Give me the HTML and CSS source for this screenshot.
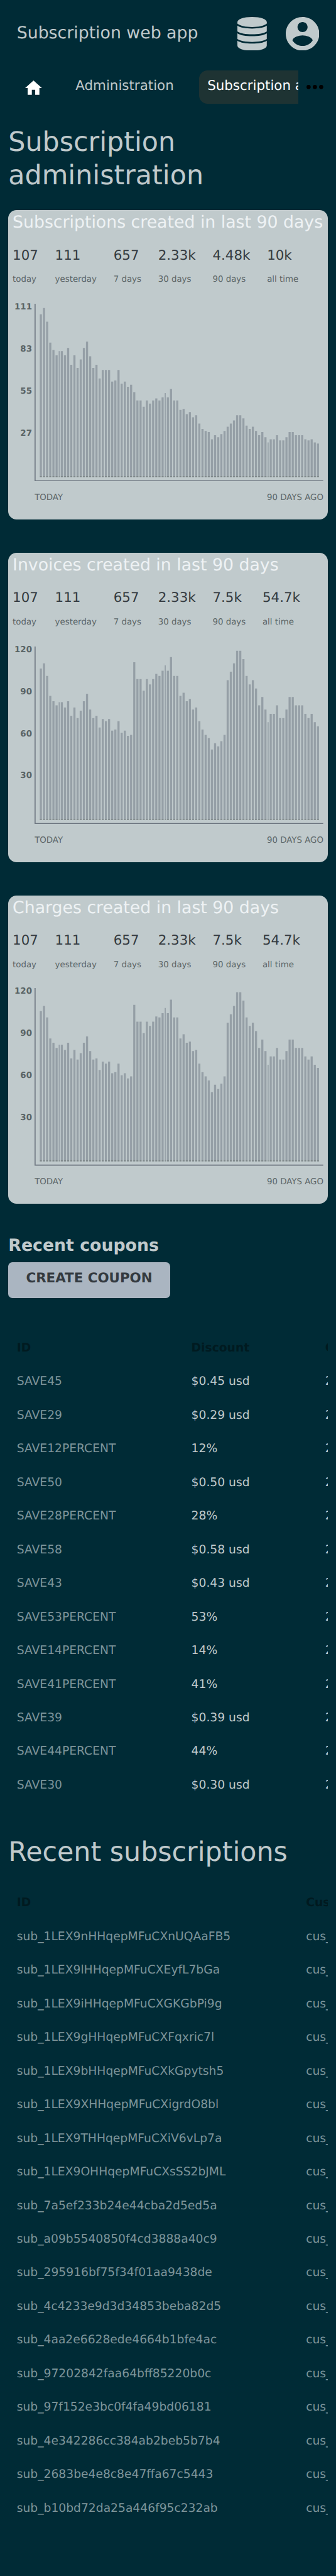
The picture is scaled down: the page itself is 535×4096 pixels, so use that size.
FILE: index.html
```html
<!DOCTYPE html>
<html lang="en">
<head>
<meta charset="utf-8">
<title>Subscription administration</title>
<link rel="stylesheet" href="styles.css">
</head>
<body>
<header class="header">
  <div class="brand">Subscription web app</div>
  <svg class="icon-data" viewBox="0 0 56 64" fill="currentColor"><path d="M0 10C0 4 12 0 28 0s28 4 28 10v2.5C51 16.7 41 19 28 19S5 16.7 0 12.5z"/><path d="M0 16.5C6 20.5 16 22 28 22s22-1.5 28-5.5v11C51 31 40 33 28 33S5 31 0 27.5z"/><path d="M0 31C6 35 16 36.4 28 36.4S50 35 56 31v11c-5 3.5-16 5.5-28 5.500S5 45.500 0 42z"/><path d="M0 45.300C6 49.300 16 50.700 28 50.700s22-1.400 28-5.400V54c0 6-12 10-28 10S0 60 0 54z"/></svg>
  <svg class="icon-user" viewBox="2 2 20 20" fill="currentColor"><path d="M12 2C6.480 2 2 6.480 2 12s4.480 10 10 10 10-4.480 10-10S17.520 2 12 2zm0 3c1.660 0 3 1.340 3 3s-1.340 3-3 3-3-1.340-3-3 1.340-3 3-3zm0 14.200c-2.500 0-4.710-1.280-6-3.220.03-1.990 4-3.080 6-3.080 1.990 0 5.970 1.090 6 3.080-1.290 1.940-3.500 3.220-6 3.220z"/></svg>
</header>
<nav class="nav">
  <div class="nav-items">
    <a class="nav-item nav-home"><svg viewBox="2 3 20 17" fill="currentColor"><path d="M10 20v-6h4v6h5v-8h3L12 3 2 12h3v8z"/></svg></a>
    <a class="nav-item">Administration</a>
    <a class="nav-item active">Subscription administration</a>
  </div>
  <svg class="nav-more" viewBox="0 0 32 8"><circle cx="4" cy="4" r="4"/><circle cx="16" cy="4" r="4"/><circle cx="28" cy="4" r="4"/></svg>
</nav>
<main>
  <h1>Subscription administration</h1>

  <section class="card">
    <h2 class="card-title">Subscriptions created in last 90 days</h2>
    <div class="stats">
      <div><b>107</b><span>today</span></div><div><b>111</b><span>yesterday</span></div><div><b>657</b><span>7 days</span></div><div><b>2.33k</b><span>30 days</span></div><div><b>4.48k</b><span>90 days</span></div><div><b>10k</b><span>all time</span></div>
    </div>
    <div class="chart">
      <div class="scale"><span>111</span><span>83</span><span>55</span><span>27</span></div>
      <svg class="plot" viewBox="0 0 550 338" data-series="subscriptions"></svg>
    </div>
    <div class="range"><span>TODAY</span><span>90 DAYS AGO</span></div>
  </section>

  <section class="card">
    <h2 class="card-title">Invoices created in last 90 days</h2>
    <div class="stats">
      <div><b>107</b><span>today</span></div><div><b>111</b><span>yesterday</span></div><div><b>657</b><span>7 days</span></div><div><b>2.33k</b><span>30 days</span></div><div><b>7.5k</b><span>90 days</span></div><div><b>54.7k</b><span>all time</span></div>
    </div>
    <div class="chart">
      <div class="scale"><span>120</span><span>90</span><span>60</span><span>30</span></div>
      <svg class="plot" viewBox="0 0 550 338" data-series="invoices"></svg>
    </div>
    <div class="range"><span>TODAY</span><span>90 DAYS AGO</span></div>
  </section>

  <section class="card card-last">
    <h2 class="card-title">Charges created in last 90 days</h2>
    <div class="stats">
      <div><b>107</b><span>today</span></div><div><b>111</b><span>yesterday</span></div><div><b>657</b><span>7 days</span></div><div><b>2.33k</b><span>30 days</span></div><div><b>7.5k</b><span>90 days</span></div><div><b>54.7k</b><span>all time</span></div>
    </div>
    <div class="chart">
      <div class="scale"><span>120</span><span>90</span><span>60</span><span>30</span></div>
      <svg class="plot" viewBox="0 0 550 338" data-series="charges"></svg>
    </div>
    <div class="range"><span>TODAY</span><span>90 DAYS AGO</span></div>
  </section>

  <h3>Recent coupons</h3>
  <a class="button">CREATE COUPON</a>
  <div class="table-wrap coupons">
    <table>
      <tr><th>ID</th><th>Discount</th><th>C</th></tr>
      <tr><td><a>SAVE45</a></td><td>$0.45 usd</td><td>2</td></tr>
      <tr><td><a>SAVE29</a></td><td>$0.29 usd</td><td>2</td></tr>
      <tr><td><a>SAVE12PERCENT</a></td><td>12%</td><td>2</td></tr>
      <tr><td><a>SAVE50</a></td><td>$0.50 usd</td><td>2</td></tr>
      <tr><td><a>SAVE28PERCENT</a></td><td>28%</td><td>2</td></tr>
      <tr><td><a>SAVE58</a></td><td>$0.58 usd</td><td>2</td></tr>
      <tr><td><a>SAVE43</a></td><td>$0.43 usd</td><td>2</td></tr>
      <tr><td><a>SAVE53PERCENT</a></td><td>53%</td><td>2</td></tr>
      <tr><td><a>SAVE14PERCENT</a></td><td>14%</td><td>2</td></tr>
      <tr><td><a>SAVE41PERCENT</a></td><td>41%</td><td>2</td></tr>
      <tr><td><a>SAVE39</a></td><td>$0.39 usd</td><td>2</td></tr>
      <tr><td><a>SAVE44PERCENT</a></td><td>44%</td><td>2</td></tr>
      <tr><td><a>SAVE30</a></td><td>$0.30 usd</td><td>2</td></tr>
    </table>
  </div>

  <h2 class="section-title">Recent subscriptions</h2>
  <div class="table-wrap subscriptions">
    <table>
      <tr><th>ID</th><th>Cus</th></tr>
      <tr><td><a>sub_1LEX9nHHqepMFuCXnUQAaFB5</a></td><td><a>cus_</a></td></tr>
      <tr><td><a>sub_1LEX9lHHqepMFuCXEyfL7bGa</a></td><td><a>cus_</a></td></tr>
      <tr><td><a>sub_1LEX9iHHqepMFuCXGKGbPi9g</a></td><td><a>cus_</a></td></tr>
      <tr><td><a>sub_1LEX9gHHqepMFuCXFqxric7l</a></td><td><a>cus_</a></td></tr>
      <tr><td><a>sub_1LEX9bHHqepMFuCXkGpytsh5</a></td><td><a>cus_</a></td></tr>
      <tr><td><a>sub_1LEX9XHHqepMFuCXigrdO8bl</a></td><td><a>cus_</a></td></tr>
      <tr><td><a>sub_1LEX9THHqepMFuCXiV6vLp7a</a></td><td><a>cus_</a></td></tr>
      <tr><td><a>sub_1LEX9OHHqepMFuCXsSS2bJML</a></td><td><a>cus_</a></td></tr>
      <tr><td><a>sub_7a5ef233b24e44cba2d5ed5a</a></td><td><a>cus_</a></td></tr>
      <tr><td><a>sub_a09b5540850f4cd3888a40c9</a></td><td><a>cus_</a></td></tr>
      <tr><td><a>sub_295916bf75f34f01aa9438de</a></td><td><a>cus_</a></td></tr>
      <tr><td><a>sub_4c4233e9d3d34853beba82d5</a></td><td><a>cus_</a></td></tr>
      <tr><td><a>sub_4aa2e6628ede4664b1bfe4ac</a></td><td><a>cus_</a></td></tr>
      <tr><td><a>sub_97202842faa64bff85220b0c</a></td><td><a>cus_</a></td></tr>
      <tr><td><a>sub_97f152e3bc0f4fa49bd06181</a></td><td><a>cus_</a></td></tr>
      <tr><td><a>sub_4e342286cc384ab2beb5b7b4</a></td><td><a>cus_</a></td></tr>
      <tr><td><a>sub_2683be4e8c8e47ffa67c5443</a></td><td><a>cus_</a></td></tr>
      <tr><td><a>sub_b10bd72da25a446f95c232ab</a></td><td><a>cus_</a></td></tr>
    </table>
  </div>
</main>
<script src="charts.js"></script>
</body>
</html>
```
FILE: styles.css
```css
/* 1rem is ten units of a 640-unit wide layout */
html {
  font-size: 8.357px;
}
* {
  box-sizing: border-box;
}
body {
  margin: 0;
  min-height: 4096px;
  background: #002b36;
  color: #c0cacc;
  font-family: "DejaVu Sans", Verdana, sans-serif;
  text-rendering: geometricPrecision;
  overflow-x: hidden;
}
svg {
  display: block;
  flex: none;
}
h1, h2, h3 {
  margin: 0;
  font-weight: normal;
}

.header {
  display: flex;
  align-items: center;
  height: 12.8rem;
  padding: 0 3.2rem;
}
.brand {
  flex: 1;
  font-size: 3.2rem;
  line-height: 4rem;
  padding-bottom: 0.1rem;
}
.icon-data {
  width: 5.6rem;
  height: 6.4rem;
  margin-right: 3.6rem;
}
.icon-user {
  width: 6.4rem;
  height: 6.4rem;
}

.nav {
  display: flex;
  align-items: center;
  padding: 0.6rem 2.4rem 0 3.2rem;
}
.nav-items {
  display: flex;
  flex: none;
  gap: 3.2rem;
  width: 53.6rem;
  margin-right: 1.6rem;
  overflow: hidden;
}
.nav-item {
  flex: none;
  height: 6.4rem;
  padding: 0 1.6rem;
  font-size: 2.56rem;
  line-height: 5.9rem;
  white-space: nowrap;
}
.nav-home {
  padding-top: 1.9rem;
  color: #fff;
}
.nav-home svg {
  width: 3.2rem;
  height: 2.72rem;
}
.nav-item.active {
  border-radius: 1.6rem;
  background: #1e3333;
  color: #fff;
}
.nav-more {
  width: 3.2rem;
  height: 0.8rem;
}

main {
  padding: 4.1rem 1.6rem 0;
}
h1, .section-title {
  font-size: 5.12rem;
  line-height: 6.4rem;
}

.card {
  height: 58.8rem;
  margin-bottom: 6.4rem;
  border-radius: 1.6rem;
  background: #c0cacc;
}
h1 + .card {
  margin-top: 3.3rem;
}
.card-last {
  height: 58.6rem;
  margin-bottom: 6rem;
}
.card-title {
  padding-left: 0.8rem;
  font-size: 3.2rem;
  line-height: 4.75rem;
  color: #eef2f4;
  white-space: nowrap;
}
.stats {
  display: flex;
  gap: 3.2rem;
  padding: 2.35rem 0.8rem 0;
}
.stats b {
  display: block;
  font-size: 2.56rem;
  font-weight: normal;
  line-height: 3.1rem;
  color: #343a40;
}
.stats span {
  display: block;
  margin-top: 1.85rem;
  font-size: 1.6rem;
  line-height: 2.4rem;
  color: #5c6668;
}
.chart {
  display: flex;
  gap: 0.5rem;
  margin-top: 3.35rem;
}
.card-last .chart {
  margin-top: 3.15rem;
}
.scale {
  width: 4.5rem;
  font-size: 1.6rem;
  font-weight: bold;
  line-height: 1.5rem;
  text-align: right;
  color: #5a6466;
}
.scale span {
  display: block;
  height: 8rem;
}
.plot {
  width: 55rem;
  height: 33.8rem;
}
.axis {
  fill: none;
  stroke: #6c757f;
  stroke-width: 2;
}
.bars {
  fill: #959fa6;
}
.bar-feet {
  fill: #7d8688;
}
.range {
  display: flex;
  justify-content: space-between;
  padding: 1.95rem 0.8rem 0 5rem;
  font-size: 1.6rem;
  line-height: 2.4rem;
  color: #5c6668;
}
/* the scale's last row ends inside the plot height */
.scale {
  height: 33.8rem;
}

h3 {
  font-size: 3.2rem;
  font-weight: bold;
  line-height: 4rem;
}
.button {
  display: block;
  width: 30.8rem;
  height: 6.8rem;
  margin-top: 1.2rem;
  border-radius: 0.8rem;
  background: #aab5c1;
  color: #343a40;
  font-size: 2.56rem;
  font-weight: bold;
  line-height: 6.3rem;
  text-align: center;
}

.table-wrap {
  overflow: hidden;
}
table {
  width: 80rem;
  table-layout: fixed;
  border-collapse: collapse;
}
th, td {
  height: 6.4rem;
  padding: 0.3rem 0 0 1.6rem;
  font-size: 2.24rem;
  line-height: 3.2rem;
  text-align: left;
}
th {
  color: #001a20;
}
td a {
  color: #7d949a;
}
.coupons {
  margin-top: 6.22rem;
}
.coupons th:nth-child(1) {
  width: 33.25rem;
}
.coupons th:nth-child(2) {
  width: 25.5rem;
}
.section-title {
  margin-top: 6.46rem;
}
.subscriptions {
  margin-top: 3.14rem;
}
.subscriptions th:nth-child(1) {
  width: 55.1rem;
}
```
FILE: charts.js
```js
// Bar heights in plot units, from today back to 90 days ago.
const series = {
  subscriptions: [
    308, 320, 294, 254, 240, 230, 238, 238, 230, 244, 212, 230, 206, 222, 244,
    256, 228, 206, 212, 186, 202, 202, 202, 180, 182, 202, 176, 180, 170, 174,
    160, 144, 144, 132, 144, 138, 144, 148, 144, 150, 158, 150, 166, 144, 144,
    126, 128, 118, 122, 112, 116, 100, 90, 86, 84, 70, 78, 74, 80, 86,
    94, 100, 106, 116, 116, 110, 96, 90, 94, 86, 78, 84, 74, 64, 70,
    70, 78, 68, 68, 74, 84, 84, 78, 78, 78, 70, 68, 70, 64, 62
  ],
  invoices: [
    286, 296, 272, 234, 224, 216, 222, 222, 212, 224, 196, 212, 192, 206, 224,
    238, 208, 192, 196, 174, 190, 186, 190, 168, 170, 186, 164, 168, 158, 160,
    298, 266, 266, 244, 266, 256, 266, 276, 272, 282, 292, 282, 308, 272, 272,
    234, 240, 224, 228, 208, 212, 186, 170, 160, 154, 132, 144, 138, 148, 160,
    264, 280, 296, 320, 320, 304, 272, 256, 264, 248, 216, 232, 208, 184, 200,
    200, 216, 192, 192, 208, 232, 232, 216, 216, 216, 200, 192, 200, 184, 176
  ],
  charges: [
    284, 294, 272, 232, 224, 214, 220, 220, 210, 224, 194, 210, 192, 204, 224,
    236, 208, 192, 194, 172, 188, 184, 188, 166, 168, 184, 162, 166, 156, 160,
    296, 264, 264, 242, 264, 256, 264, 274, 272, 280, 290, 280, 306, 272, 272,
    232, 240, 224, 226, 208, 210, 184, 168, 160, 152, 130, 144, 136, 146, 160,
    262, 278, 294, 320, 320, 304, 272, 256, 262, 246, 214, 230, 208, 182, 198,
    198, 214, 192, 192, 208, 230, 230, 214, 214, 214, 198, 192, 198, 182, 176
  ]
};

const narrow = [6, 40, 73];

document.querySelectorAll(".plot").forEach((plot) => {
  let x = 10;
  let bars = "";
  let feet = "";
  series[plot.dataset.series].forEach((height, i) => {
    const width = narrow.includes(i) ? 2 : 4;
    bars += `M${x} ${328 - height}h${width}V328h-${width}z`;
    feet += `M${x} 328h${width}v2h-${width}z`;
    x += width + 2;
  });
  plot.innerHTML =
    `<path class="axis" d="M1 0V337H550"/>` +
    `<path class="bars" d="${bars}"/><path class="bar-feet" d="${feet}"/>`;
});
```
